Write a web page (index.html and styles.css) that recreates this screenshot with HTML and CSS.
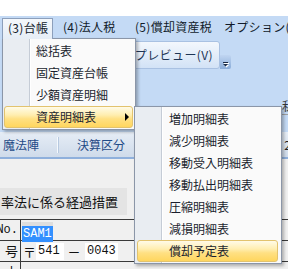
FILE: index.html
```html
<!DOCTYPE html>
<html lang="ja">
<head>
<meta charset="utf-8">
<title>台帳メニュー</title>
<link rel="stylesheet" href="styles.css">
</head>
<body>
<div class="screen">
  <div class="topstrip"></div>
  <div class="menubar">
    <div class="mitem open">(3)台帳</div>
    <div class="mitem m4">(4)法人税</div>
    <div class="mitem m5">(5)償却資産税</div>
    <div class="mitem m6">オプション(O)</div>
  </div>
  <div class="ribbon">
    <div class="btngroup">
      <div class="previewbtn">印刷プレビュー(V)</div>
      <div class="dropbtn">
        <svg width="11" height="14" viewBox="0 0 11 14">
          <rect x="4" y="8" width="5" height="1" fill="#ffffff"/>
          <polygon points="4,10 9,10 6.5,12.5" fill="#ffffff"/>
          <rect x="3" y="7" width="5" height="1" fill="#1b2a44"/>
          <polygon points="3,9 8,9 5.5,11.5" fill="#1b2a44"/>
        </svg>
      </div>
    </div>
    <div class="edgebox">私</div>
  </div>
  <div class="tabbar">
    <span class="tab first">魔法陣</span>
    <span class="tsep"></span>
    <span class="tab">決算区分</span>
    <span class="tabnum">2</span>
  </div>
  <div class="content">
    <div class="notice">率法に係る経過措置</div>
    <div class="table">
      <div class="row">
        <div class="lbl mono"><span>No.</span></div>
        <div class="val"><span class="field"><span class="sel mono">SAM1</span></span></div>
      </div>
      <div class="row">
        <div class="lbl"><span>号</span></div>
        <div class="val"><span class="zip">〒</span><span class="wbox mono">541</span><span class="dash">－</span><span class="wbox w2 mono">0043</span></div>
      </div>
      <div class="row">
        <div class="lbl"><span>本</span></div>
        <div class="val addr">大阪市中央区本町一丁目</div>
      </div>
    </div>
  </div>

  <div class="menu menu1">
    <div class="mi">総括表</div>
    <div class="mi">固定資産台帳</div>
    <div class="mi">少額資産明細</div>
    <div class="mi hot">資産明細表
      <svg class="subarrow" width="5" height="8" viewBox="0 0 5 8"><polygon points="0,0 4,4 0,8" fill="#000"/></svg>
    </div>
  </div>

  <div class="menu menu2">
    <div class="mi">増加明細表</div>
    <div class="mi">減少明細表</div>
    <div class="mi">移動受入明細表</div>
    <div class="mi">移動払出明細表</div>
    <div class="mi">圧縮明細表</div>
    <div class="mi">減損明細表</div>
    <div class="mi hot">償却予定表</div>
  </div>
</div>
</body>
</html>
```
FILE: styles.css
```css
html, body {
  margin: 0;
  padding: 0;
}
body {
  width: 288px;
  height: 269px;
  overflow: hidden;
  font-family: "Noto Sans CJK JP", "Noto Sans", sans-serif;
  font-size: 12px;
  color: #111;
}
.screen {
  position: relative;
  width: 288px;
  height: 269px;
  overflow: hidden;
  background: #f0f0f0;
}
.topstrip {
  height: 16px;
  background: #ffffff;
}
.menubar {
  height: 21px;
  background: #c4daf5;
  display: flex;
  align-items: flex-start;
  padding-left: 2px;
  white-space: nowrap;
}
.mitem {
  flex-shrink: 0;
  height: 21px;
  line-height: 21px;
  color: #111a2a;
  letter-spacing: 0.3px;
}
.mitem.open {
  position: relative;
  z-index: 5;
  margin-top: 2px;
  height: 20px;
  line-height: 18px;
  width: 44px;
  padding-left: 5px;
  border: 1px solid #8c9fbb;
  border-bottom: none;
  background: linear-gradient(#f4f7fb, #e6edf6);
}
.m4 { padding-left: 10px; width: 67px; }
.m5 { padding-left: 5px; width: 84px; }
.m6 { padding-left: 5px; }

.ribbon {
  height: 95px;
  background: #c4daf5;
  display: flex;
  flex-direction: column;
}
.btngroup {
  display: flex;
  align-items: flex-start;
  padding-left: 104px;
  padding-top: 4px;
}
.previewbtn {
  flex-shrink: 0;
  width: 108px;
  height: 26px;
  line-height: 26px;
  padding-right: 6px;
  text-align: right;
  color: #1e3556;
  letter-spacing: 0.4px;
  border: 1px solid #a9c1e2;
  border-radius: 3px;
  background: linear-gradient(#f3f7fd 0%, #e3edf9 50%, #d2e2f6 100%);
  white-space: nowrap;
}
.dropbtn {
  flex-shrink: 0;
  width: 11px;
  height: 14px;
  margin-top: 14px;
  border-radius: 0 2px 2px 0;
  background: linear-gradient(#c0d5f1, #8badd9);
}
.dropbtn svg { display: block; }
.edgebox {
  margin-top: 28px;
  margin-left: 282px;
  height: 17px;
  line-height: 17px;
  color: #333;
  font-size: 12px;
  border-bottom: 1px solid #a0a0a0;
  white-space: nowrap;
}

.tabbar {
  height: 25px;
  border-bottom: 2px solid #8fb0dc;
  background: linear-gradient(#e6edf6, #cfdbea);
  display: flex;
  align-items: center;
  white-space: nowrap;
}
.tab {
  color: #1f4a86;
  font-size: 12px;
}
.tab.first { padding-left: 3px; }
.tsep {
  width: 1px;
  height: 16px;
  margin: 0 19px 0 18px;
  background: #f5f9fd;
  box-shadow: 1px 0 0 #b7c9e0;
}
.tabnum {
  margin-left: auto;
  margin-right: -3px;
  color: #222;
}

.content {
  padding-top: 29px;
}
.notice {
  width: 126px;
  height: 27px;
  line-height: 27px;
  padding-left: 1px;
  background: #e4e4e4;
  font-size: 13px;
  color: #111;
  white-space: nowrap;
  overflow: hidden;
}
.table {
  margin-top: 4px;
  border-top: 1px solid #3a3a3a;
}
.row {
  display: flex;
  height: 20px;
  border-bottom: 1px solid #3a3a3a;
}
.lbl {
  flex-shrink: 0;
  width: 18px;
  padding-right: 2px;
  border-right: 1px solid #3a3a3a;
  display: flex;
  justify-content: flex-end;
  line-height: 20px;
  font-size: 13px;
  white-space: nowrap;
  overflow: hidden;
}
.lbl span { flex-shrink: 0; }
.mono {
  font-family: "Liberation Mono", "DejaVu Sans Mono", monospace;
  font-size: 12px;
}
.val {
  display: flex;
  align-items: center;
  padding-left: 1px;
  white-space: nowrap;
  font-size: 13px;
}
.field {
  display: inline-block;
  width: 31px;
  height: 16px;
  background: #dedede;
}
.sel {
  display: inline-block;
  height: 16px;
  line-height: 16px;
  background: #3390ff;
  color: #ffffff;
  padding: 0 1px;
}
.zip {
  width: 12px;
  padding-left: 1px;
}
.wbox {
  display: inline-block;
  width: 26px;
  height: 17px;
  line-height: 17px;
  margin-left: 1px;
  padding-left: 2px;
  background: #ffffff;
}
.wbox.w2 { width: 31px; }
.dash {
  width: 20px;
  text-align: center;
}
.addr { padding-top: 14px; align-items: flex-start; }

.menu {
  position: absolute;
  border: 1px solid #8b96a8;
  box-shadow: 2px 2px 3px rgba(0, 0, 0, 0.28);
  padding: 1px 0;
  z-index: 4;
}
.menu1 {
  left: 2px;
  top: 38px;
  width: 132px;
  background: linear-gradient(to right, #e9edf2 0, #e9edf2 26px, #c5ccd6 26px, #c5ccd6 27px, #ffffff 27px, #ffffff 28px, #fafafa 28px);
}
.menu2 {
  left: 134px;
  top: 106px;
  width: 146px;
  z-index: 6;
  background: linear-gradient(to right, #e9edf2 0, #e9edf2 26px, #c5ccd6 26px, #c5ccd6 27px, #ffffff 27px, #ffffff 28px, #fafafa 28px);
}
.mi {
  position: relative;
  height: 22px;
  line-height: 22px;
  padding-left: 33px;
  color: #1b1f2e;
  white-space: nowrap;
}
.menu2 .mi { padding-left: 34px; }
.mi.hot {
  margin: 0 2px 0 1px;
  padding-left: 31px;
  height: 20px;
  line-height: 20px;
  border: 1px solid #e2c36e;
  border-radius: 3px;
  background: linear-gradient(#fffbe8 0%, #ffeeb0 40%, #ffe082 60%, #ffd65e 100%);
}
.menu2 .mi.hot {
  margin: 0 3px 0 2px;
  padding-left: 31px;
}
.subarrow {
  position: absolute;
  left: 120px;
  top: 6px;
}
```
